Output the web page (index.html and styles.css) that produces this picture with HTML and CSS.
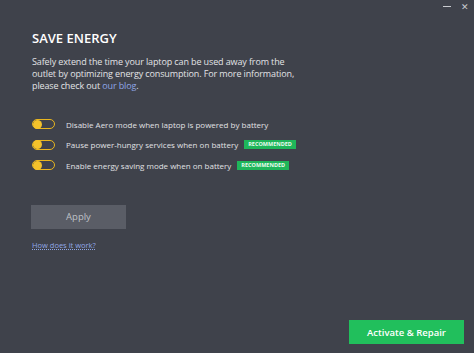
FILE: index.html
```html
<!DOCTYPE html>
<html lang="en">
<head>
  <meta charset="UTF-8">
  <title>Save Energy</title>
  <link rel="stylesheet" href="styles.css">
</head>
<body>
  <div class="window">
    <div class="titlebar">
      <span class="win-btn min"></span>
      <span class="win-btn close">&#x2715;</span>
    </div>
    <div class="content">
      <h1>SAVE ENERGY</h1>
      <p class="intro">Safely extend the time your laptop can be used away from the<br>
        outlet by optimizing energy consumption. For more information,<br>
        please check out <a href="#">our blog</a>.</p>
      <ul class="options">
        <li><span class="toggle"></span>Disable Aero mode when laptop is powered by battery</li>
        <li><span class="toggle"></span>Pause power-hungry services when on battery <span class="badge">RECOMMENDED</span></li>
        <li><span class="toggle"></span>Enable energy saving mode when on battery <span class="badge">RECOMMENDED</span></li>
      </ul>
      <button class="apply">Apply</button>
      <a class="how" href="#">How does it work?</a>
    </div>
    <div class="footer">
      <button class="activate">Activate &amp; Repair</button>
    </div>
  </div>
</body>
</html>
```

FILE: styles.css
```css
body {
  margin: 0;
  background-color: #3f424b;
  font-family: 'Open Sans', sans-serif;
  color: #e4e5e8;
}

.window {
  width: 474px;
  height: 353px;
  display: flex;
  flex-direction: column;
}

.titlebar {
  height: 12px;
  display: flex;
  justify-content: flex-end;
  align-items: center;
  gap: 10px;
  padding: 0 5px 0 0;
}

.win-btn {
  color: #c9cbd0;
  font-size: 9px;
  line-height: 9px;
}

.win-btn.min {
  width: 8px;
  height: 1px;
  background-color: #c9cbd0;
}

.content {
  flex: 1;
  padding: 17px 32px 0;
}

h1 {
  margin: 0;
  font-size: 13px;
  font-weight: 600;
  color: #ffffff;
  line-height: 18px;
}

.intro {
  margin: 9px 0 0;
  font-size: 9px;
  letter-spacing: -0.12px;
  line-height: 12px;
  color: #e2e3e6;
}

.intro a {
  color: #8fa6e6;
  text-decoration: none;
}

.options {
  list-style: none;
  margin: 22px 0 0;
  padding: 0;
}

.options li {
  display: flex;
  align-items: center;
  height: 20.5px;
  font-size: 8px;
  color: #e0e1e4;
}

.toggle {
  width: 21px;
  height: 8px;
  border: 1.5px solid #e9b61f;
  border-radius: 6px;
  margin-right: 11px;
  position: relative;
}

.toggle::after {
  content: '';
  position: absolute;
  left: -0.5px;
  top: -0.5px;
  width: 9px;
  height: 9px;
  border-radius: 50%;
  background-color: #f4c22b;
}

.badge {
  margin-left: 6px;
  background-color: #1fb65a;
  color: #e9fbef;
  font-size: 5.5px;
  font-weight: 700;
  padding: 1px 4px;
  line-height: 7px;
}

.apply {
  display: block;
  margin: 29px 0 0 -1px;
  width: 95px;
  height: 24px;
  border: none;
  background-color: #5a5d66;
  color: #bfc1c6;
  font-family: 'Open Sans', sans-serif;
  font-size: 9.5px;
}

.how {
  display: inline-block;
  margin-top: 11px;
  font-size: 7.5px;
  color: #8fa6e6;
  text-decoration: underline dotted;
}

.footer {
  display: flex;
  justify-content: flex-end;
  padding: 0 10px 9px 0;
}

.activate {
  width: 115px;
  height: 24px;
  border: none;
  background-color: #21bf5c;
  color: #ffffff;
  font-family: 'Open Sans', sans-serif;
  font-size: 9.5px;
  font-weight: 600;
}
```
